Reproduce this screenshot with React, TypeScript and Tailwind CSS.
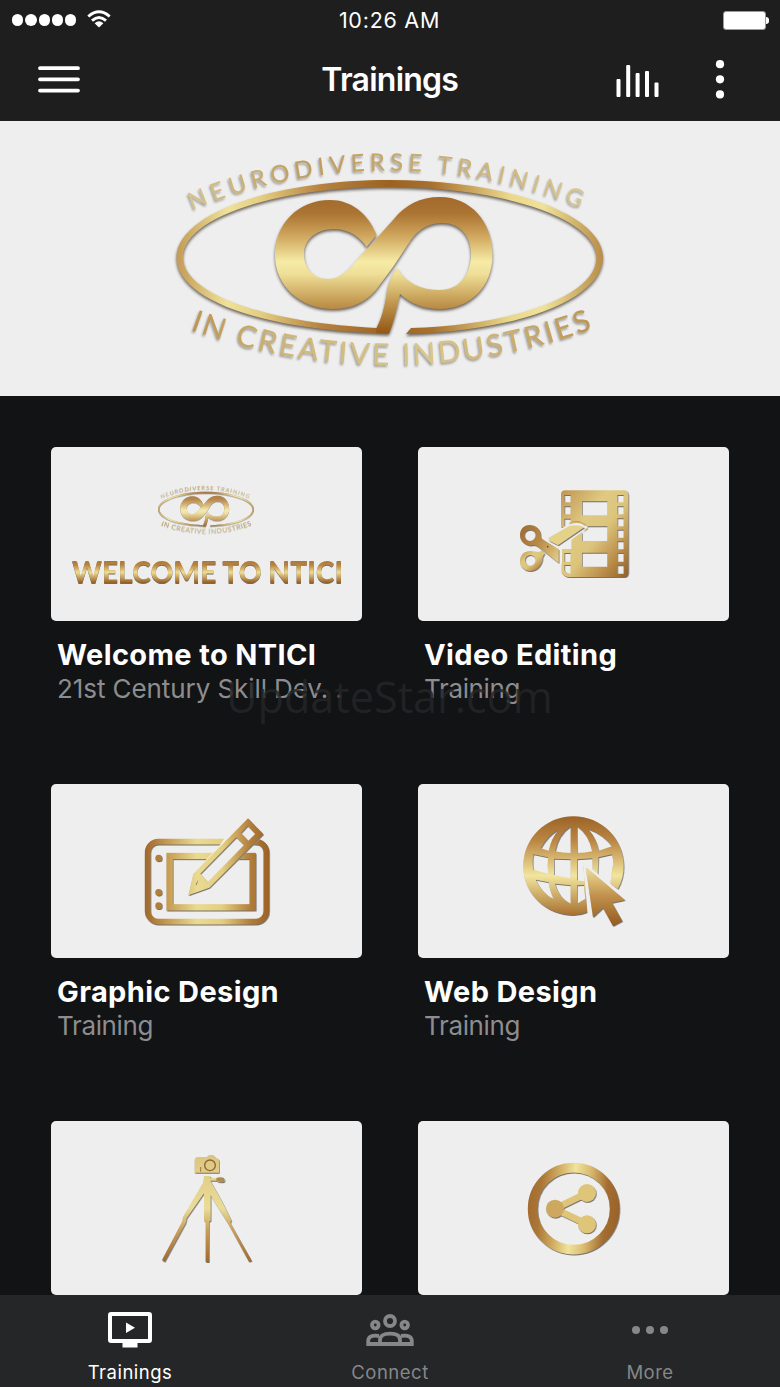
import type { ReactNode } from "react";

const SHADOW = "[filter:drop-shadow(2px_3px_1.5px_rgba(50,45,40,0.65))]";

// Shared gold gradients, referenced by every drawing on the page
function GoldDefs() {
  return (
    <svg className="absolute size-0" aria-hidden="true">
      <defs>
        <linearGradient id="gold-v" gradientUnits="userSpaceOnUse" x1="0" y1="197" x2="0" y2="332">
          <stop offset="0" stopColor="#a2692b" />
          <stop offset="0.13" stopColor="#ad7634" />
          <stop offset="0.3" stopColor="#d2aa61" />
          <stop offset="0.48" stopColor="#f6eba6" />
          <stop offset="0.57" stopColor="#efdf97" />
          <stop offset="0.78" stopColor="#c29850" />
          <stop offset="1" stopColor="#955817" />
        </linearGradient>
        <linearGradient id="gold-ring" gradientUnits="userSpaceOnUse" x1="176" y1="0" x2="603" y2="0">
          <stop offset="0" stopColor="#c39a55" />
          <stop offset="0.12" stopColor="#efe298" />
          <stop offset="0.2" stopColor="#e3cd80" />
          <stop offset="0.34" stopColor="#b6823f" />
          <stop offset="0.5" stopColor="#9b6220" />
          <stop offset="0.6" stopColor="#a8712e" />
          <stop offset="0.78" stopColor="#ead78a" />
          <stop offset="0.86" stopColor="#efe298" />
          <stop offset="1" stopColor="#b98d48" />
        </linearGradient>
        <linearGradient id="gold-text" x1="0" y1="0" x2="1" y2="0">
          <stop offset="0" stopColor="#d9c78f" />
          <stop offset="0.3" stopColor="#c09b5b" />
          <stop offset="0.6" stopColor="#c9ac6e" />
          <stop offset="1" stopColor="#d9c78f" />
        </linearGradient>
        <linearGradient id="gold-text-b" x1="0" y1="0" x2="1" y2="0">
          <stop offset="0" stopColor="#bd9450" />
          <stop offset="0.25" stopColor="#d0b777" />
          <stop offset="0.6" stopColor="#d9c688" />
          <stop offset="1" stopColor="#bd9450" />
        </linearGradient>
        <linearGradient id="gold-title" x1="0" y1="0" x2="0" y2="1">
          <stop offset="0.15" stopColor="#a66d2c" />
          <stop offset="0.35" stopColor="#b9853f" />
          <stop offset="0.55" stopColor="#f0dc93" />
          <stop offset="0.85" stopColor="#935c22" />
        </linearGradient>
        <linearGradient id="gold-film" x1="0" y1="0" x2="1" y2="1">
          <stop offset="0" stopColor="#bf9451" />
          <stop offset="0.35" stopColor="#dfca83" />
          <stop offset="0.55" stopColor="#dcc47b" />
          <stop offset="0.8" stopColor="#b88b48" />
          <stop offset="1" stopColor="#8f5f29" />
        </linearGradient>
        <linearGradient id="gold-scissors" gradientUnits="userSpaceOnUse" x1="60" y1="160" x2="180" y2="240">
          <stop offset="0" stopColor="#a06c30" />
          <stop offset="0.5" stopColor="#b98b48" />
          <stop offset="1" stopColor="#e0ca84" />
        </linearGradient>
        <linearGradient id="gold-tablet" gradientUnits="userSpaceOnUse" x1="45" y1="0" x2="418" y2="0">
          <stop offset="0" stopColor="#a06729" />
          <stop offset="0.18" stopColor="#c69b52" />
          <stop offset="0.42" stopColor="#eadb91" />
          <stop offset="0.62" stopColor="#e4ce80" />
          <stop offset="0.85" stopColor="#b27d3a" />
          <stop offset="1" stopColor="#9a6226" />
        </linearGradient>
        <linearGradient id="gold-globe" gradientUnits="userSpaceOnUse" x1="0" y1="35" x2="0" y2="330">
          <stop offset="0" stopColor="#9c6427" />
          <stop offset="0.25" stopColor="#bb8843" />
          <stop offset="0.6" stopColor="#f2e59e" />
          <stop offset="1" stopColor="#a87130" />
        </linearGradient>
        <linearGradient id="gold-cursor" gradientUnits="userSpaceOnUse" x1="0" y1="185" x2="0" y2="360">
          <stop offset="0" stopColor="#f0e19a" />
          <stop offset="0.5" stopColor="#c0914c" />
          <stop offset="1" stopColor="#955c20" />
        </linearGradient>
        <linearGradient id="gold-tripod" gradientUnits="userSpaceOnUse" x1="0" y1="30" x2="0" y2="350">
          <stop offset="0" stopColor="#dcc581" />
          <stop offset="0.5" stopColor="#eadc97" />
          <stop offset="0.7" stopColor="#c8a05b" />
          <stop offset="1" stopColor="#9f6a30" />
        </linearGradient>
        <linearGradient id="gold-circle" gradientUnits="userSpaceOnUse" x1="40" y1="165" x2="312" y2="190">
          <stop offset="0" stopColor="#a46d2f" />
          <stop offset="0.12" stopColor="#aa7536" />
          <stop offset="0.32" stopColor="#d3b166" />
          <stop offset="0.48" stopColor="#f0e39c" />
          <stop offset="0.65" stopColor="#d9ba70" />
          <stop offset="0.85" stopColor="#a46d30" />
          <stop offset="1" stopColor="#98622a" />
        </linearGradient>
      </defs>
    </svg>
  );
}

// Drawn on a 780-wide canvas whose origin is the top of the screen
function LogoArt({ id }: { id: string }) {
  return (
    <>
      <path id={`${id}-top`} d="M192 210 A509 509 0 0 1 585 210" fill="none" />
      <path id={`${id}-bottom`} d="M190 329.500 A583 583 0 0 0 596 327.500" fill="none" />
      <g className="[filter:drop-shadow(-1px_2px_1px_rgba(90,85,75,0.55))]" fontFamily="Lato, sans-serif">
        <text fontSize="24" fill="url(#gold-text)">
          <textPath href={`#${id}-top`} textLength="398" lengthAdjust="spacing">NEURODIVERSE TRAINING</textPath>
        </text>
        <text fontSize="30" fill="url(#gold-text-b)">
          <textPath href={`#${id}-bottom`} textLength="411" lengthAdjust="spacing">IN CREATIVE INDUSTRIES</textPath>
        </text>
      </g>
      <g className="[filter:drop-shadow(0px_2px_1.5px_rgba(60,50,40,0.75))]">
        <path
          fill="url(#gold-ring)"
          d="M389.500 333.500 C265 331 176.500 300 176.500 257.500 C176.500 214 272 180 389.500 180 C507 180 603 214 603 257.500 C603 298 522 331 406 334 L411 328 C516 325 596.500 295 596.500 257.500 C596.500 219 504 187 389.500 187 C275 187 183 218 183 257.500 C183 293 265 323 377 328 Z"
        />
        <path
          fill="url(#gold-v)"
          d="M376.500 235 C368 213 351 200 330 200 C298 200 275 224 275 255 C275 286 300 309 333 309 C352 309 366 302 376 290 L393 267 L411 240 C420 228 430 223 442 223 C460 223 471 236 471 254 C471 275 459 290 440 290 C421 290 406 283 397 268 C391 276 388 285 387 292 C385 305 382 318 376.500 328 L376 333 L389 333.500 C394 322 397 307 400 294 C411 304 424 309 440 309 C470 309 492.500 287 492.500 255 C492.500 221 470 197 440 197 C420 197 405 205 394 219 L368 248 C355 260 346 279 328 279 C313 279 304 268 304 254 C304 240 316 229 334 229 C349 229 360 237 366.500 247 Z"
        />
      </g>
    </>
  );
}

function WelcomeArt() {
  return (
    <svg viewBox="0 0 311 174" className="block w-full">
      <svg x="104" y="31.500" width="102" height="60" viewBox="163 121 453 266" opacity="0.85">
        <LogoArt id="mini" />
      </svg>
      <text
        x="21"
        y="135.500"
        textLength="271"
        lengthAdjust="spacingAndGlyphs"
        fontFamily="Lato, sans-serif"
        fontWeight="900"
        fontSize="30"
        fill="url(#gold-title)"
        className="[filter:drop-shadow(0.5px_1px_0.5px_rgba(60,50,40,0.7))]"
      >
        WELCOME TO NTICI
      </text>
    </svg>
  );
}

function FilmArt() {
  return (
    <g transform="translate(246 84)">
      <path
        className={SHADOW}
        fillRule="evenodd"
        fill="url(#gold-film)"
        d="M196 46 H372 Q385 46 385 59 V292 Q385 306 372 306 H208 Q192 306 185 292 V258 H180 V220 L195 208 L262 160 Q258 142 232 138 L208 142 V156 H183 V59 Q183 46 196 46 Z
        M193 60 V82 H212 V60 Z M193 94 V118 H212 V94 Z M193 131 V155 L212 147 V131 Z M193 234 V260 H212 V234 Z M193 270 V285 Q198 295 212 296 V270 Z
        M352 60 V82 H371 V60 Z M352 94 V118 H371 V94 Z M352 130 V154 H371 V130 Z M352 164 V188 H371 V164 Z M352 199 V223 H371 V199 Z M352 234 V260 H371 V234 Z M352 271 V296 H371 V271 Z
        M246 79 V121 H322 V79 Z M263 154 L246 172 V198 H322 V154 Z M246 233 V275 H322 V233 Z"
      />
      {/* Clear band that separates the blades from the film */}
      <path d="M140 184 L204 149 Q245 136 263 156 L214 192 V222 H186 L186 268 L140 234 Z" fill="#eeeeee" />
      <path
        className={SHADOW}
        fillRule="evenodd"
        fill="url(#gold-scissors)"
        d="M88 150 C108 150 124 164 122 182 Q121 189 130 194 L176 223 V264 L118 218 Q106 208 98 211 C76 214 60 198 60 180 C60 163 72 150 88 150 Z M90 164 A17 17 0 1 0 90 198 A17 17 0 1 0 90 164 Z"
      />
      <path
        className={SHADOW}
        fillRule="evenodd"
        fill="url(#gold-film)"
        d="M91 228 L118 231 L124 226 L134 236 L128 246 C128 270 111 288 90 288 C73 288 60 275 60 258 C60 240 73 228 91 228 Z M91 240 A16 16 0 1 0 91 272 A16 16 0 1 0 91 240 Z"
      />
      <path className={SHADOW} d="M146 188 Q178 170 208 153 Q234 147 253 157 L174 211 L149 198 Z" fill="#e4d18a" />
      <path d="M213 144 Q240 136 258 152" fill="none" stroke="#d1b168" strokeWidth="5" />
      <circle cx="143" cy="215" r="2.500" fill="#6d4c24" />
    </g>
  );
}

function TabletArt() {
  return (
    <g transform="translate(237 63)">
      <g className={SHADOW}>
        <rect x="53" y="110" width="356" height="240" rx="32" fill="none" stroke="url(#gold-tablet)" strokeWidth="17" />
        <rect x="119" y="153" width="249" height="154" fill="none" stroke="url(#gold-tablet)" strokeWidth="19" />
        <g fill="#b47d39">
          <circle cx="86" cy="159" r="10" />
          <circle cx="86" cy="262" r="10" />
          <circle cx="86" cy="302" r="10" />
        </g>
      </g>
      {/* Pencil, with a cleared margin where it crosses the frames */}
      <path d="M345 38 L402 90 L240 252 L172 274 L180 214 L228 164 L248 144 L270 119 L282 101 Z" fill="#eeeeee" />
      <path
        className={SHADOW}
        fillRule="evenodd"
        fill="url(#gold-tablet)"
        d="M354 40 L400 87 L238 248 L175 271 L190 206 Z M211 206 L233 230 L237 227 L342 120 L319 97 Z M333 84 L355 107 L376 86 L353 62 Z M197 238 L205 224 L200 242 Z"
      />
    </g>
  );
}

function GlobeArt() {
  return (
    <g transform="translate(276 63)">
      <path
        className={SHADOW}
        fillRule="evenodd"
        fill="url(#gold-globe)"
        d="M190 34 C274 34 341 100 341 183 Q341 221 323 252 L220 180 L232 321 Q212 330 190 330 C107 330 40 265 40 183 C40 100 107 34 190 34 Z
        M182 64 V144 Q158 144 135 139 Q145 88 182 64 Z M201 64 V144 Q225 144 247 139 Q236 88 201 64 Z
        M148 72 Q112 92 92 130 L116 137 Q124 98 148 72 Z M234 72 Q258 98 266 137 L306 124 Q278 87 234 72 Z
        M70 148 Q66 175 70 194 L116 207 Q111 184 114 157 Z M132 161 V210 L182 220 V163 Z M201 163 V226 L222 229 V180 L248 201 L247 160 Z M265 157 L306 148 Q313 175 306 194 L301 238 L263 208 Z
        M77 224 Q96 265 131 282 Q119 254 116 232 Z M135 236 Q146 278 182 296 V241 Z M201 241 V296 L226 281 L222 240 Z"
      />
      <path d="M219 172 L326 256 L350 285 L310 300 L277 325 L247 350 L233 326 Z" fill="#eeeeee" />
      <path className={SHADOW} d="M227 186 L345 285 L306 293 L337 348 L309 363 L279 309 L249 337 Z" fill="url(#gold-cursor)" />
    </g>
  );
}

function TripodArt() {
  return (
    <g transform="translate(297 72)" className={SHADOW}>
      <g fill="url(#gold-tripod)">
        <path d="M134 42 L140 36 H170 L177 30 H190 L196 38 Q207 39 207 48 V83 H134 Z" />
        <path d="M162 93 H181 V100 H199 Q206 96 222 99 Q226 105 222 111 Q206 113 199 107 H181 L214 166 L244 226 L241 234 L305 347 L297 350 L235 237 L182 151 V227 L177 230 V351 H167 V230 L162 227 V145 L110 220 L107 234 L44 350 L36 345 L97 229 L99 216 L160 112 Z" />
      </g>
      <circle cx="180" cy="61" r="16" fill="none" stroke="#8b6735" strokeWidth="4" />
      <path d="M152 66 V80" stroke="#9c7944" strokeWidth="3" />
      <path d="M199 99 Q211 95 222 99 V111 Q210 112 199 107 Z" fill="#b18a50" />
    </g>
  );
}

function ShareArt() {
  return (
    <g transform="translate(291 87)" className={SHADOW}>
      <circle cx="176" cy="176" r="123" fill="none" stroke="url(#gold-circle)" strokeWidth="29" />
      <g fill="#dec578" stroke="#dec578">
        <path d="M119 176 L216 129 M119 176 L216 222" strokeWidth="20" />
        <circle cx="120" cy="176" r="27" fill="#cda85e" stroke="none" />
        <circle cx="216" cy="129" r="27" stroke="none" />
        <circle cx="216" cy="223" r="27" stroke="none" />
      </g>
    </g>
  );
}

function CardCanvas({ children }: { children: ReactNode }) {
  return (
    <svg viewBox="0 0 933 522" className="block w-full">
      {children}
    </svg>
  );
}

type Training = { title?: string; subtitle?: string; subtitleSpacing?: string; art: ReactNode };

const trainings: Training[] = [
  {
    title: "Welcome to NTICI",
    subtitle: "21st Century Skill Dev. .",
    subtitleSpacing: "tracking-[-0.080px]",
    art: <WelcomeArt />,
  },
  { title: "Video Editing", subtitle: "Training", art: <CardCanvas><FilmArt /></CardCanvas> },
  { title: "Graphic Design", subtitle: "Training", art: <CardCanvas><TabletArt /></CardCanvas> },
  { title: "Web Design", subtitle: "Training", art: <CardCanvas><GlobeArt /></CardCanvas> },
  { art: <CardCanvas><TripodArt /></CardCanvas> },
  { art: <CardCanvas><ShareArt /></CardCanvas> },
];

function TrainingCard({ title, subtitle, subtitleSpacing = "tracking-[-0.350px]", art }: Training) {
  return (
    <div className="h-[337px]">
      <div className="h-[174px] overflow-hidden rounded-[5px] bg-[#eeeeee]">{art}</div>
      {title && (
        <div className="pl-[6px] pt-4">
          <h2 className="whitespace-nowrap text-[29px] font-bold leading-9 tracking-[0.370px] text-white">{title}</h2>
          <p className={`whitespace-nowrap text-[26px] leading-8 text-[#8d8d8f] ${subtitleSpacing}`}>{subtitle}</p>
        </div>
      )}
    </div>
  );
}

function StatusBar() {
  return (
    <div className="flex h-10 items-center justify-between pl-3 pr-[11px]">
      <div className="flex w-[200px] items-center gap-[2px] text-white">
        {[0, 1, 2, 3, 4].map((i) => (
          <span key={i} className="size-[11.300px] rounded-full bg-white" />
        ))}
        <svg viewBox="0 0 24 18" className="ml-[9px] mt-[-2px] h-[18px] w-6" fill="none" stroke="currentColor" strokeWidth="2.900">
          <path d="M1.300 6.500 Q12 -2.800 22.700 6.500" />
          <path d="M5 10.700 Q12 4.400 19 10.700" />
          <path d="M7.600 13.300 Q12 9 16.400 13.300 L12 17.500 Z" fill="currentColor" stroke="none" />
        </svg>
      </div>
      <span className="mr-[2px] mt-[2px] text-[21.500px] leading-none tracking-[0.750px] text-white">10:26 AM</span>
      <div className="flex w-[200px] items-center justify-end">
        <span className="h-[19px] w-[43px] rounded-[3px] border-[1.500px] border-[#9b9b9b] bg-white" />
        <span className="h-[7px] w-[3px] rounded-r-full bg-white" />
      </div>
    </div>
  );
}

function NavBar() {
  return (
    <div className="flex h-[81px] items-start justify-between px-[38px]">
      <svg viewBox="0 0 42 30" className="mt-6 h-[30px] w-[42px]" stroke="white" strokeWidth="3.800" strokeLinecap="round">
        <path d="M2 4.200 H40 M2 15.300 H40 M2 26.600 H40" />
      </svg>
      <h1 className="ml-[84px] mt-5 text-[32px] font-semibold leading-10 tracking-[-0.750px] text-white">Trainings</h1>
      <div className="flex">
        <svg viewBox="616 60 43 40" className="mt-5 h-10 w-[43px]" fill="white">
          <rect x="616.500" y="79" width="4" height="18" rx="1" />
          <rect x="626.200" y="65" width="4" height="32" rx="1" />
          <rect x="635.600" y="73" width="4" height="24" rx="1" />
          <rect x="645" y="71" width="4" height="26" rx="1" />
          <rect x="654.500" y="82.500" width="4" height="14.500" rx="1" />
        </svg>
        <svg viewBox="0 0 20 40" className="ml-[51.500px] mt-5 h-10 w-5" fill="white">
          <circle cx="10" cy="4.200" r="4.100" />
          <circle cx="10" cy="19.300" r="4.100" />
          <circle cx="10" cy="34.400" r="4.100" />
        </svg>
        <span className="w-3" />
      </div>
    </div>
  );
}

function TrainingsIcon() {
  return (
    <svg viewBox="0 0 44 36" className="h-9 w-11">
      <path
        fill="currentColor"
        fillRule="evenodd"
        d="M3 0 H41 Q44 0 44 3 V28 Q44 31 41 31 H29.500 V35.500 H14.500 V31 H3 Q0 31 0 28 V3 Q0 0 3 0 Z M4 4 V27 H40 V4 Z M18 10.500 L27 15.700 L18 21 Z"
      />
    </svg>
  );
}

function ConnectIcon() {
  return (
    <svg viewBox="0 0 48 36" className="h-9 w-12" fill="none" stroke="currentColor" strokeWidth="3.800">
      <circle cx="24" cy="9" r="5" />
      <circle cx="9.300" cy="13" r="3.300" />
      <circle cx="38.700" cy="13" r="3.300" />
      <path d="M14 32 V28 Q14 21.700 24 21.700 Q34 21.700 34 28 V32" />
      <path d="M13 24 Q2.200 22.500 2.200 29 V32 H45.800 V29 Q45.800 22.500 35 24" />
    </svg>
  );
}

function MoreIcon() {
  return (
    <svg viewBox="0 0 36 36" className="size-9" fill="currentColor">
      <circle cx="4" cy="18" r="4" />
      <circle cx="18" cy="18" r="4" />
      <circle cx="32" cy="18" r="4" />
    </svg>
  );
}

const tabs = [
  { label: "Trainings", icon: <TrainingsIcon />, color: "text-white" },
  { label: "Connect", icon: <ConnectIcon />, color: "text-[#868788]" },
  { label: "More", icon: <MoreIcon />, color: "text-[#868788]" },
];

export default function App() {
  return (
    <div className="relative flex h-[1387px] w-[780px] flex-col overflow-hidden bg-[#111315] font-[Inter,'Liberation_Sans',sans-serif]">
      <GoldDefs />
      <header className="h-[121px] shrink-0 bg-[#1e1e1e]">
        <StatusBar />
        <NavBar />
      </header>

      {/* Banner */}
      <div className="h-[275px] shrink-0 bg-[#eeeeee]">
        <svg viewBox="0 121 780 275" className="block h-full w-full">
          <LogoArt id="banner" />
        </svg>
      </div>

      <main className="grid h-[899px] shrink-0 grid-cols-2 content-start gap-x-14 overflow-hidden px-[51px] pt-[51px]">
        {trainings.map((training, i) => (
          <TrainingCard key={i} {...training} />
        ))}
      </main>

      <div className="pointer-events-none absolute left-[226px] top-[667px] whitespace-nowrap font-['Open_Sans',sans-serif] text-[43.200px] leading-[60px] text-[#242527]/85">
        UpdateStar.com
      </div>

      {/* Tab bar */}
      <nav className="grid h-[92px] shrink-0 grid-cols-3 bg-[#252627]">
        {tabs.map((tab) => (
          <div key={tab.label} className={`flex flex-col items-center pt-[17px] ${tab.color}`}>
            {tab.icon}
            <span className="mt-3 text-[18.500px] leading-6 tracking-[0.500px]">{tab.label}</span>
          </div>
        ))}
      </nav>
    </div>
  );
}
